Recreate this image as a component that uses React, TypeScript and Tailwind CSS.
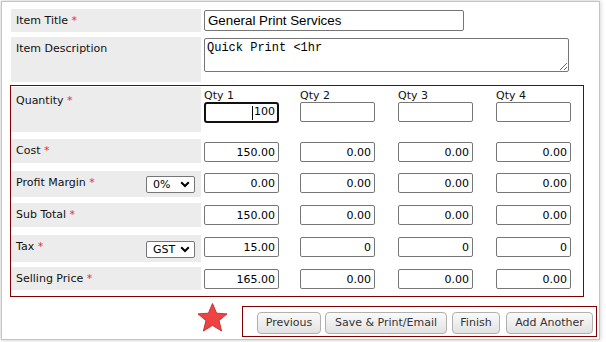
import React from "react";

const label = "font-['DejaVu_Sans',sans-serif] text-[11px] leading-[13px] text-[#111]";
const boxInput =
  "block h-[20px] w-[75px] rounded-[2px] border border-[#767676] bg-white px-[3px] text-right font-['DejaVu_Sans',sans-serif] text-[11px] text-black outline-none";

// column widths after the label cell: 204 -> 300 -> 398 -> 496
const colWidths = ["w-[96px]", "w-[98px]", "w-[98px]", "w-[78px]"];

function Req() {
  return <span className="text-[#e0322d]"> *</span>;
}

function FakeSelect({ value }: { value: string }) {
  return (
    <div className="flex h-[17px] w-[49px] items-center justify-between rounded-[2px] border border-[#767676] bg-white pl-[6px] pr-[4px] font-['DejaVu_Sans',sans-serif] text-[11px] leading-none text-black">
      <span>{value}</span>
      <svg width="10" height="7" viewBox="0 0 10 7">
        <path d="M1.2 1.3 L5 5 L8.8 1.3" fill="none" stroke="#000" strokeWidth="2" />
      </svg>
    </div>
  );
}

interface RowProps {
  name: string;
  values: string[];
  bgH: string;
  mt: string;
  inputMt: string;
  select?: string;
  selectMt?: string;
}

function PriceRow({ name, values, bgH, mt, inputMt, select, selectMt }: RowProps) {
  return (
    <div className={`flex items-start ${mt}`}>
      <div className={`mr-[3px] flex w-[190px] shrink-0 items-start justify-between bg-[#ececec] pl-[5px] pr-[6px] ${bgH}`}>
        <div className={`pt-[5px] ${label}`}>
          {name}
          <Req />
        </div>
        {select && (
          <div className={selectMt}>
            <FakeSelect value={select} />
          </div>
        )}
      </div>
      {values.map((v, i) => (
        <div key={i} className={`shrink-0 ${colWidths[i]} ${inputMt}`}>
          <input readOnly value={v} className={boxInput} />
        </div>
      ))}
    </div>
  );
}

export default function App() {
  return (
    <div className="h-[342px] w-[606px] bg-white pl-[1px] pt-[1px]">
      <div className="flex h-[339px] w-[599px] flex-col border border-[#c4c4c4] bg-white pl-[8px] pt-[7px] shadow-[0_0_5px_rgba(0,0,0,0.22)]">
        {/* Item title */}
        <div className="flex h-[23px] items-start pl-[1px]">
          <div className={`mr-[3px] h-[23px] w-[190px] shrink-0 bg-[#ececec] pl-[5px] pt-[5px] ${label}`}>
            Item Title
            <Req />
          </div>
          <input
            readOnly
            value="General Print Services"
            className="mt-[1px] block h-[21px] w-[260px] rounded-[2px] border border-[#767676] bg-white px-[3px] font-['Liberation_Sans',sans-serif] text-[13.33px] text-black outline-none"
          />
        </div>

        {/* Item description */}
        <div className="mt-[5px] flex h-[45px] items-start pl-[1px]">
          <div className={`mr-[3px] h-[45px] w-[190px] shrink-0 bg-[#ececec] pl-[5px] pt-[5px] ${label}`}>
            Item Description
          </div>
          <textarea
            readOnly
            value="Quick Print <1hr"
            className="mt-[1px] block h-[34px] w-[365px] resize rounded-[2px] border border-[#767676] bg-white px-[2px] py-[2px] font-['Liberation_Mono',monospace] text-[12px] leading-[14px] text-black outline-none"
          />
        </div>

        {/* Price grid */}
        <div className="mt-[3px] w-[574px] border border-[#800000] pb-[6px]">
          <div className="mt-[1px] flex h-[45px] items-start">
            <div className={`mr-[3px] h-[45px] w-[190px] shrink-0 bg-[#ececec] pl-[5px] pt-[7px] ${label}`}>
              Quantity
              <Req />
            </div>
            {["Qty 1", "Qty 2", "Qty 3", "Qty 4"].map((q, i) => (
              <div key={q} className={`shrink-0 pt-[2px] ${colWidths[i]}`}>
                <div className={label}>{q}</div>
                {i === 0 ? (
                  <div className="flex h-[21px] w-[75px] items-center justify-end rounded-[3px] border-2 border-[#111] bg-white pr-[2px] font-['DejaVu_Sans',sans-serif] text-[11px] text-black">
                    <span className="mr-[1px] h-[14px] border-l border-black" />
                    100
                  </div>
                ) : (
                  <input readOnly value="" className={boxInput} />
                )}
              </div>
            ))}
          </div>

          <PriceRow name="Cost" values={["150.00", "0.00", "0.00", "0.00"]} bgH="h-[24px]" mt="mt-[7px]" inputMt="mt-[3px]" />
          <PriceRow
            name="Profit Margin"
            values={["0.00", "0.00", "0.00", "0.00"]}
            bgH="h-[26px]"
            mt="mt-[8px]"
            inputMt="mt-[2px]"
            select="0%"
            selectMt="mt-[5px]"
          />
          <PriceRow name="Sub Total" values={["150.00", "0.00", "0.00", "0.00"]} bgH="h-[24px]" mt="mt-[6px]" inputMt="mt-[2px]" />
          <PriceRow
            name="Tax"
            values={["15.00", "0", "0", "0"]}
            bgH="h-[27px]"
            mt="mt-[8px]"
            inputMt="mt-[2px]"
            select="GST"
            selectMt="mt-[6px]"
          />
          <PriceRow name="Selling Price" values={["165.00", "0.00", "0.00", "0.00"]} bgH="h-[23px]" mt="mt-[5px]" inputMt="mt-[2px]" />
        </div>

        {/* Actions */}
        <div className="flex items-start justify-end pr-[2px]">
          <svg width="33" height="31" viewBox="0 0 33 31" className="mt-[5px] mr-[13px]">
            <path
              d="M16.5 1.5 L20.6 11.2 L31 11.9 L23 18.6 L25.6 29 L16.5 23.4 L7.4 29 L10 18.6 L2 11.9 L12.4 11.2 Z"
              fill="#ef4343"
              stroke="#c93434"
              strokeWidth="1"
              strokeLinejoin="round"
            />
          </svg>
          <div className="mt-[9px] flex h-[31px] items-start border border-[#800000] pl-[14px] pr-[3px] pt-[5px]">
            {[
              ["Previous", "w-[64px]", ""],
              ["Save & Print/Email", "w-[122px]", "ml-[4px]"],
              ["Finish", "w-[48px]", "ml-[5px]"],
              ["Add Another", "w-[87px]", "ml-[6px]"],
            ].map(([t, w, m]) => (
              <button
                key={t}
                className={`flex h-[22px] items-center justify-center rounded-[4px] border border-[#b0b0b0] bg-gradient-to-b from-[#fafafa] to-[#e2e2e2] font-['DejaVu_Sans',sans-serif] text-[11px] text-[#333] ${w} ${m}`}
              >
                {t}
              </button>
            ))}
          </div>
        </div>
      </div>
    </div>
  );
}
